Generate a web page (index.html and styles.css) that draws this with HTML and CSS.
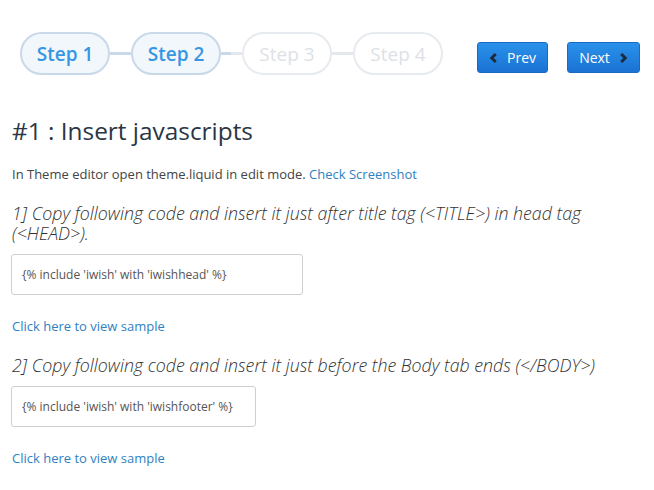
FILE: index.html
```html
<!DOCTYPE html>
<html>
<head>
<meta charset="utf-8">
<link rel="stylesheet" href="styles.css">
</head>
<body>
<div class="top">
  <div class="steps">
    <span class="step active">Step 1</span>
    <span class="line active"></span>
    <span class="step active">Step 2</span>
    <span class="line half"></span>
    <span class="step">Step 3</span>
    <span class="line"></span>
    <span class="step">Step 4</span>
  </div>
  <div class="nav">
    <button class="btn prev"><svg class="chev" viewBox="0 0 10 12" width="9" height="12"><path d="M7.5 1.5 L3 6 L7.5 10.5" fill="none" stroke="#1d2a3a" stroke-width="3.2"/></svg>Prev</button>
    <button class="btn next">Next<svg class="chev" viewBox="0 0 10 12" width="9" height="12"><path d="M2.5 1.5 L7 6 L2.5 10.5" fill="none" stroke="#1d2a3a" stroke-width="3.2"/></svg></button>
  </div>
</div>
<div class="content">
  <h1 class="title">#1 : Insert javascripts</h1>
  <p class="intro">In Theme editor open theme.liquid in edit mode. <a class="link" href="#">Check Screenshot</a></p>
  <h3 class="sub">1] Copy following code and insert it just after title tag (&lt;TITLE&gt;) in head tag (&lt;HEAD&gt;).</h3>
  <input class="code w1" type="text" value="{% include 'iwish' with 'iwishhead' %}">
  <p class="sample"><a class="link" href="#">Click here to view sample</a></p>
  <h3 class="sub">2] Copy following code and insert it just before the Body tab ends (&lt;/BODY&gt;)</h3>
  <input class="code w2" type="text" value="{% include 'iwish' with 'iwishfooter' %}">
  <p class="sample"><a class="link" href="#">Click here to view sample</a></p>
</div>
</body>
</html>
```
FILE: styles.css
```css
html, body {
  margin: 0;
  padding: 0;
  background: #fff;
  font-family: "Open Sans", "Liberation Sans", sans-serif;
  color: #333;
}
.top {
  display: flex;
  align-items: flex-start;
  justify-content: space-between;
  padding: 32px 14px 0 20px;
}
.steps {
  display: flex;
  align-items: center;
}
.step {
  box-sizing: border-box;
  width: 90px;
  height: 43px;
  border: 2.5px solid #e7eaee;
  border-radius: 22px;
  display: flex;
  align-items: center;
  justify-content: center;
  font-size: 19px;
  color: #dde1e6;
  background: #fff;
}
.step.active {
  border-color: #c9d9e9;
  background: #f2f7fb;
  color: #3796e3;
  font-weight: 600;
}
.line {
  width: 21px;
  height: 3px;
  background: #e4e8ec;
}
.line.active { background: #c9d9e9; }
.line.half { background: linear-gradient(to right, #c9d9e9 50%, #e4e8ec 50%); }
.nav {
  display: flex;
  gap: 19px;
  margin-top: 10px;
}
.btn {
  box-sizing: border-box;
  height: 31px;
  border: 1px solid #1a6ac4;
  border-radius: 3px;
  background: linear-gradient(#2a92ea, #1b72d4);
  color: #fff;
  font-family: "Open Sans", "Liberation Sans", sans-serif;
  font-size: 14px;
  display: flex;
  align-items: center;
  justify-content: center;
  gap: 9px;
  padding: 0;
}
.prev { width: 71px; }
.next { width: 73px; }
.content {
  padding: 0 12px;
}
.title {
  margin: 41px 0 0;
  font-size: 24.4px;
  font-weight: 400;
  color: #2b3644;
  line-height: 30px;
}
.intro {
  margin: 19px 0 0;
  font-size: 13px;
  color: #444;
  line-height: 18px;
}
.link {
  color: #2f7fc1;
  text-decoration: none;
}
.sub {
  margin: 20px 0 0;
  font-size: 17.8px;
  font-weight: 300;
  font-style: italic;
  color: #333;
  line-height: 20px;
}
.code {
  display: block;
  box-sizing: border-box;
  margin: 11px 0 0 -1px;
  height: 41px;
  border: 1px solid #cfcfcf;
  border-radius: 3px;
  padding: 0 10px;
  font-family: "Open Sans", "Liberation Sans", sans-serif;
  font-size: 12px;
  color: #555;
}
.w1 { width: 292px; }
.w2 { width: 245px; }
.sample {
  margin: 22px 0 0;
  font-size: 13px;
  line-height: 18px;
}
```
